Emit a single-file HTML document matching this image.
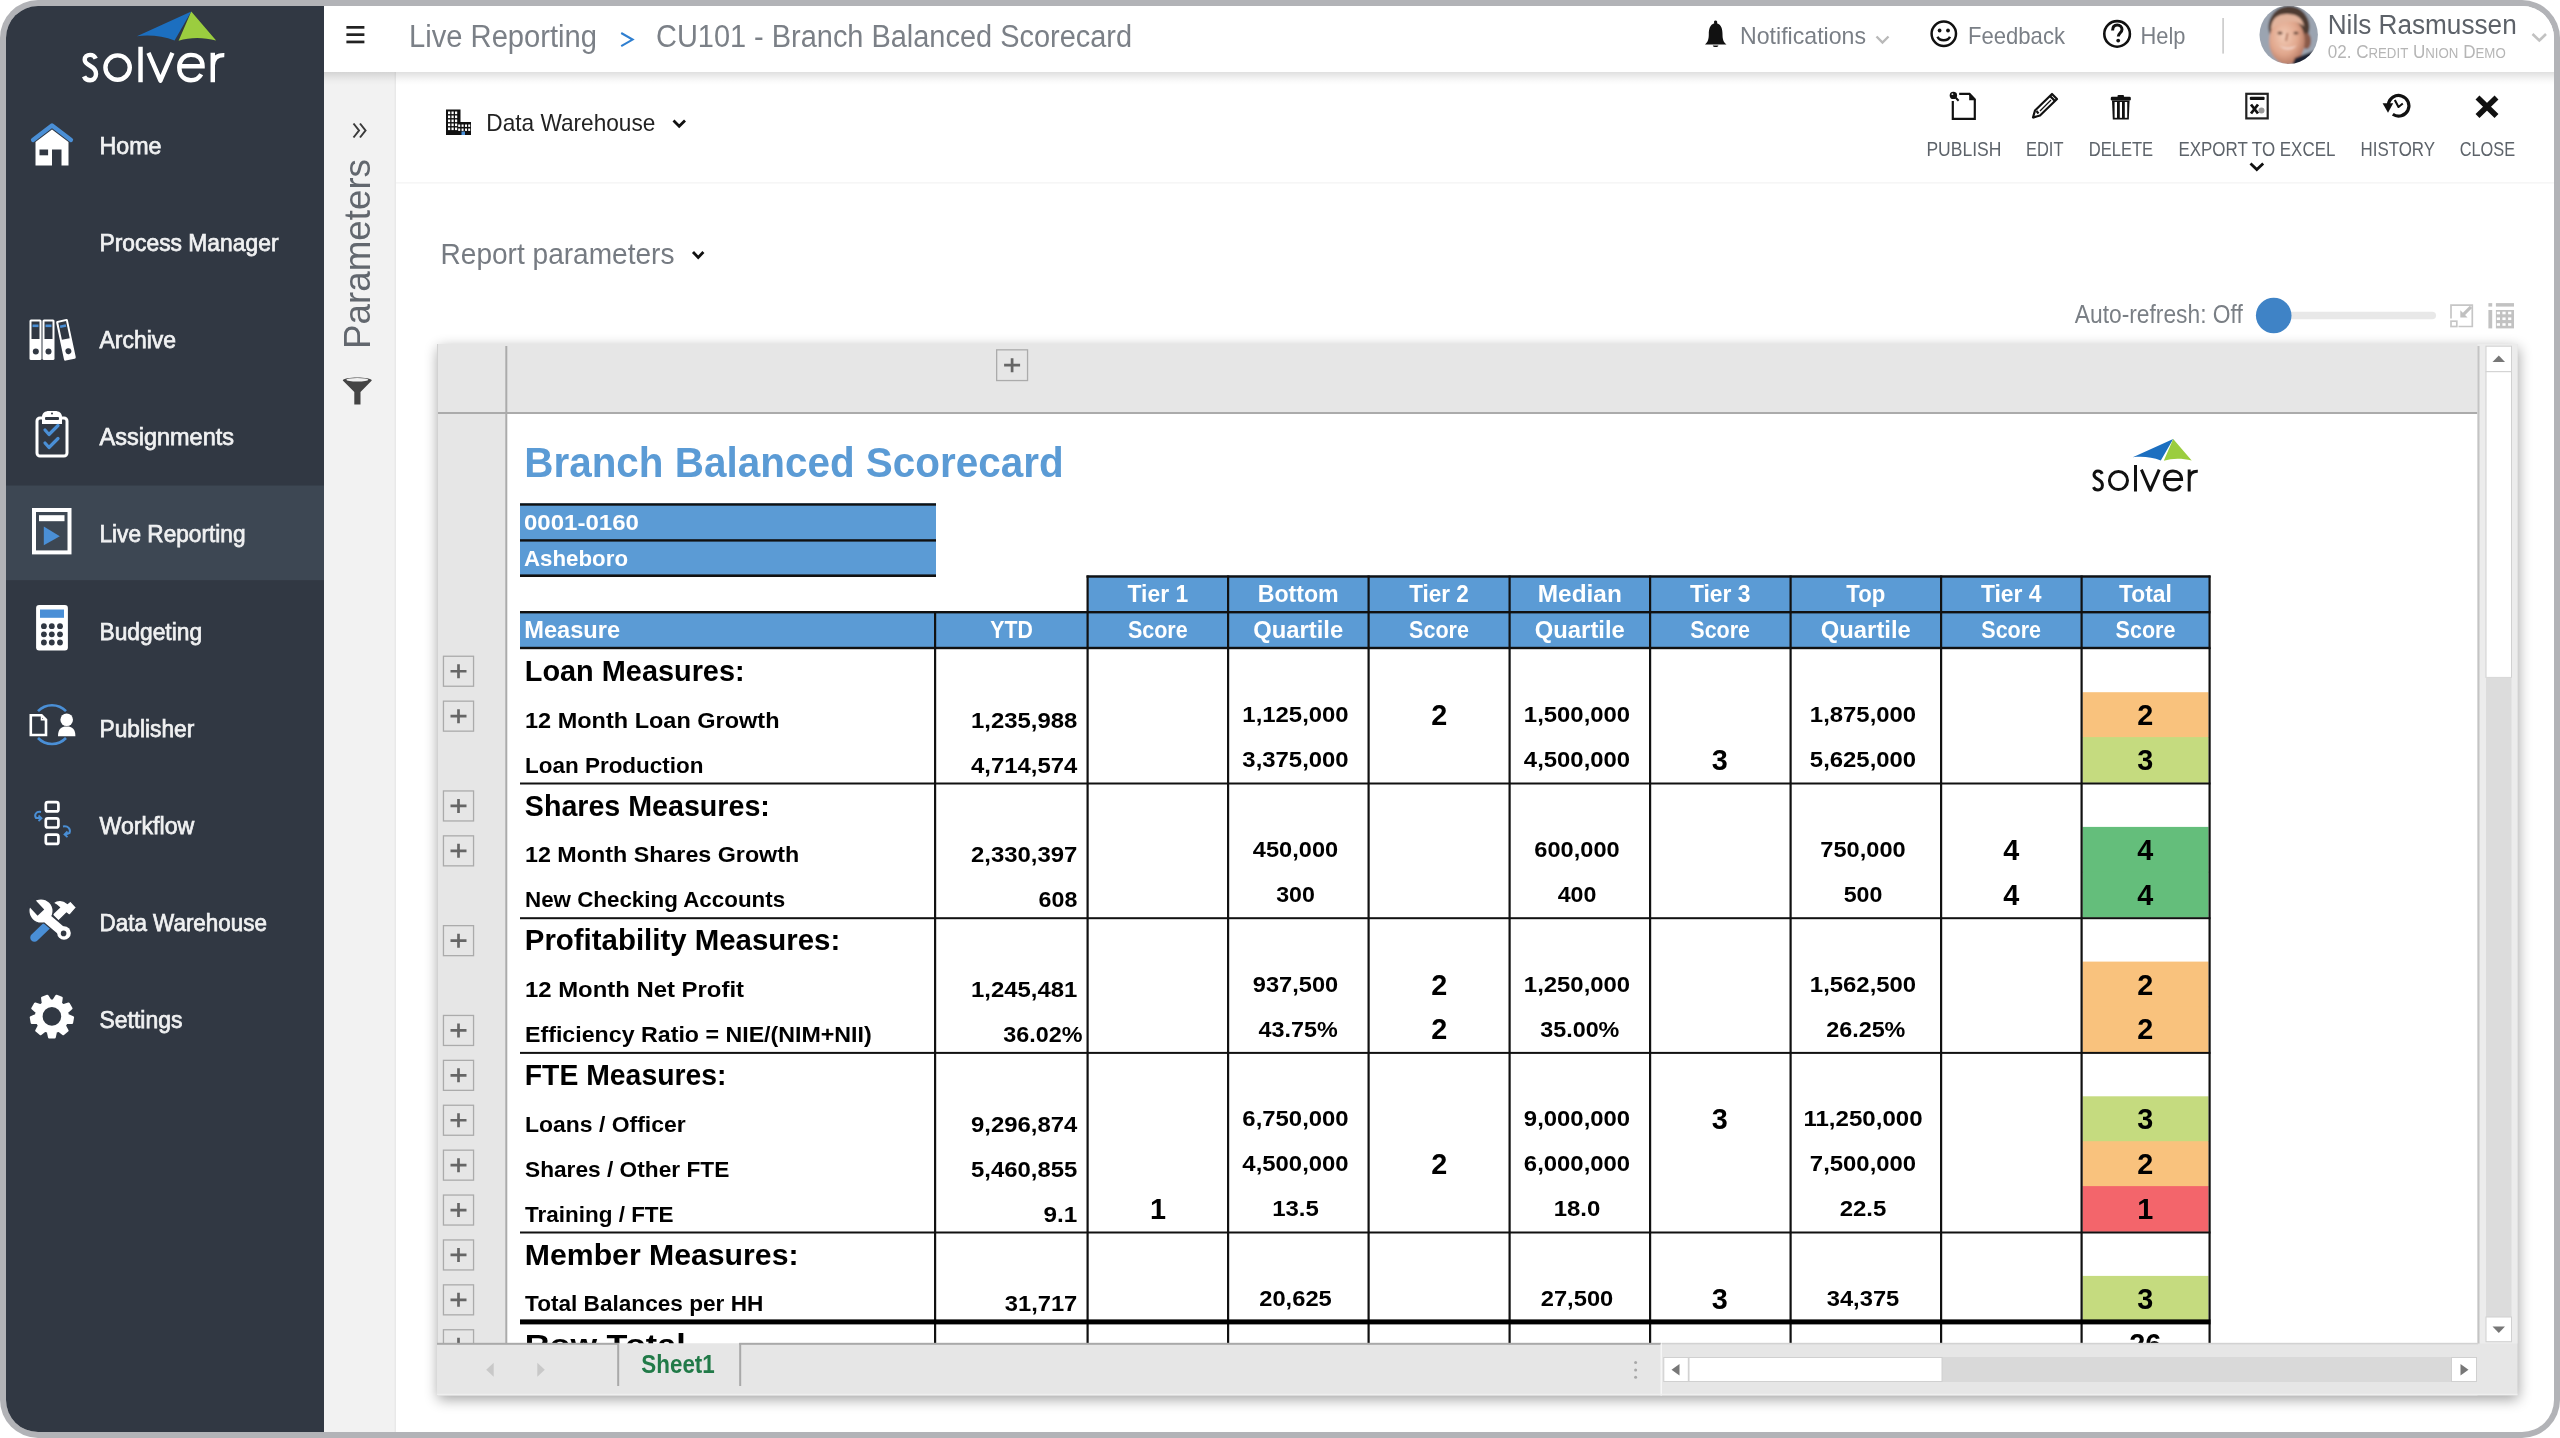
<!DOCTYPE html><html><head><meta charset="utf-8"><style>
html,body{margin:0;padding:0;background:#fff;width:2560px;height:1438px;overflow:hidden}
svg{display:block;font-family:"Liberation Sans", sans-serif;will-change:transform}
</style></head><body>
<svg width="2560" height="1438" viewBox="0 0 2560 1438">
<defs>
<clipPath id="inner"><rect x="6" y="6" width="2548" height="1426" rx="32" ry="32"/></clipPath>
<filter id="shadow" x="-5%" y="-5%" width="110%" height="110%"><feGaussianBlur stdDeviation="7"/></filter>
<filter id="blur1" x="-20%" y="-20%" width="140%" height="140%"><feGaussianBlur stdDeviation="1.2"/></filter>
<linearGradient id="topshadow" x1="0" y1="0" x2="0" y2="1"><stop offset="0" stop-color="#000" stop-opacity="0.125"/><stop offset="0.35" stop-color="#000" stop-opacity="0.07"/><stop offset="0.7" stop-color="#000" stop-opacity="0.02"/><stop offset="1" stop-color="#000" stop-opacity="0"/></linearGradient>
<radialGradient id="face" cx="0.42" cy="0.4" r="0.65"><stop offset="0" stop-color="#f2cbb6"/><stop offset="0.6" stop-color="#e0a68c"/><stop offset="1" stop-color="#b0745e"/></radialGradient>
<clipPath id="avclip"><circle cx="2288.7" cy="34.8" r="29.2"/></clipPath>
</defs>
<rect x="0" y="0" width="2560" height="1438" fill="#fff"/>
<rect x="0" y="0" width="2560" height="1438" rx="38" ry="38" fill="#b2b3b7"/>
<g clip-path="url(#inner)">
<rect x="0" y="0" width="2560" height="1438" fill="#fff"/>

<rect x="0" y="0" width="324" height="1438" fill="#313843"/>
<rect x="6" y="485.5" width="318" height="94.7" fill="#3d4753"/>
<g transform="translate(82.3,82.3) scale(1.345)">
<path d="M40.6,-34.3 L81,-52.6 L68.6,-31 C60,-34.5 50,-35.5 40.6,-34.3 Z" fill="#1c6fc0"/>
<path d="M81,-52.6 L99.5,-31 C90,-33.5 80,-33.5 71.6,-30.8 Z" fill="#9bcd3f"/>
<g fill="none" stroke="#ffffff" stroke-width="3.3" stroke-linecap="butt">
<path d="M10.0,-17.6 C9.2,-19.5 7.6,-20.4 5.8,-20.4 C3.4,-20.4 1.8,-19 1.8,-16.8 C1.8,-14.4 4,-13.2 6,-12.2 C8.6,-10.9 10.2,-9.4 10.2,-6.2 C10.2,-3.2 8.2,-1.5 5.8,-1.5 C3.6,-1.5 2,-2.6 1.3,-4.4"/>
<circle cx="26.25" cy="-10.95" r="9.05"/>
<path d="M43.3,-26.5 L43.3,0"/>
<path d="M49.2,-21.9 L58.1,-1.2 L67,-21.9" stroke-linejoin="round"/>
<path d="M72.1,-12 L89.4,-12 C89.4,-17.5 85.8,-20.4 80.75,-20.4 C75.5,-20.4 72.1,-16.4 72.1,-10.95 C72.1,-5.2 75.6,-1.5 80.75,-1.5 C84.2,-1.5 86.9,-3.2 88.4,-6"/>
<path d="M97,-21.9 L97,0 M97,-12.5 C97.4,-17.8 100.2,-20.4 105.6,-20.2"/>
</g>
</g>
<text x="99.5" y="154.0" font-size="24.6" fill="#f0f1f2" textLength="62" lengthAdjust="spacingAndGlyphs" stroke="#f0f1f2" stroke-width="0.75">Home</text>
<text x="99.5" y="251.1" font-size="24.6" fill="#f0f1f2" textLength="179" lengthAdjust="spacingAndGlyphs" stroke="#f0f1f2" stroke-width="0.75">Process Manager</text>
<text x="99.5" y="348.2" font-size="24.6" fill="#f0f1f2" textLength="76.5" lengthAdjust="spacingAndGlyphs" stroke="#f0f1f2" stroke-width="0.75">Archive</text>
<text x="99.5" y="445.3" font-size="24.6" fill="#f0f1f2" textLength="134.5" lengthAdjust="spacingAndGlyphs" stroke="#f0f1f2" stroke-width="0.75">Assignments</text>
<text x="99.5" y="542.4" font-size="24.6" fill="#f0f1f2" textLength="146" lengthAdjust="spacingAndGlyphs" stroke="#f0f1f2" stroke-width="0.75">Live Reporting</text>
<text x="99.5" y="639.5" font-size="24.6" fill="#f0f1f2" textLength="102.6" lengthAdjust="spacingAndGlyphs" stroke="#f0f1f2" stroke-width="0.75">Budgeting</text>
<text x="99.5" y="736.6" font-size="24.6" fill="#f0f1f2" textLength="94.8" lengthAdjust="spacingAndGlyphs" stroke="#f0f1f2" stroke-width="0.75">Publisher</text>
<text x="99.5" y="833.7" font-size="24.6" fill="#f0f1f2" textLength="94.8" lengthAdjust="spacingAndGlyphs" stroke="#f0f1f2" stroke-width="0.75">Workflow</text>
<text x="99.5" y="930.8" font-size="24.6" fill="#f0f1f2" textLength="167.4" lengthAdjust="spacingAndGlyphs" stroke="#f0f1f2" stroke-width="0.75">Data Warehouse</text>
<text x="99.5" y="1027.9" font-size="24.6" fill="#f0f1f2" textLength="83" lengthAdjust="spacingAndGlyphs" stroke="#f0f1f2" stroke-width="0.75">Settings</text>
<path d="M33,140 L52,125.5 L71,140" fill="none" stroke="#4a8fd6" stroke-width="4.2" stroke-linecap="round" stroke-linejoin="round"/>
<path d="M35.5,142 L52,129.5 L68.5,142 L68.5,165.5 L61.5,165.5 L61.5,149.5 L52,149.5 L52,165.5 L35.5,165.5 Z" fill="#ffffff"/>
<rect x="39.5" y="149.5" width="8.6" height="5.8" fill="#313843"/>
<rect x="29.5" y="319.5" width="12" height="40.6" rx="1.5" fill="#ffffff"/>
<rect x="42.5" y="319.5" width="12" height="40.6" rx="1.5" fill="#ffffff"/>
<rect x="31.5" y="321.5" width="8" height="17.5" fill="#313843"/><rect x="44.5" y="321.5" width="8" height="17.5" fill="#313843"/>
<rect x="32.5" y="324.5" width="6" height="2.6" fill="#4a8fd6"/><rect x="45.5" y="324.5" width="6" height="2.6" fill="#4a8fd6"/>
<circle cx="35.8" cy="351.5" r="3" fill="#313843"/><circle cx="48.5" cy="351.5" r="3" fill="#313843"/>
<g transform="rotate(-12 66 340)"><rect x="60" y="319.5" width="12" height="40.6" rx="1.5" fill="#ffffff"/><rect x="62" y="321.5" width="8" height="17.5" fill="#313843"/><rect x="63" y="324.5" width="6" height="2.6" fill="#4a8fd6"/><circle cx="66" cy="351.5" r="3" fill="#313843"/></g>
<rect x="37" y="418" width="30" height="38" rx="3" fill="none" stroke="#ffffff" stroke-width="3"/>
<path d="M42,424 L42,417 C42,413 45,411 49,411 L55,411 C59,411 62,413 62,417 L62,424 Z" fill="#ffffff"/>
<rect x="45" y="417" width="14" height="3" rx="1" fill="#313843"/><circle cx="52" cy="413.5" r="1" fill="#313843"/>
<path d="M45,430 L49,434.5 L58,425.5 M45,443 L49,447.5 L58,438.5" fill="none" stroke="#4a8fd6" stroke-width="3.2" stroke-linecap="round" stroke-linejoin="round"/>
<rect x="34" y="510" width="35.5" height="42.4" fill="none" stroke="#ffffff" stroke-width="4"/>
<rect x="39" y="515.2" width="25.5" height="6" fill="#ffffff"/>
<path d="M43.8,526.5 L59.8,536.2 L43.8,545.2 Z" fill="#4a8fd6"/>
<rect x="36.1" y="605" width="31.8" height="45.6" rx="3" fill="#ffffff"/>
<rect x="40" y="609.5" width="24" height="8.3" fill="#4a8fd6"/>
<circle cx="43.9" cy="626.2" r="2.9" fill="#313843"/>
<circle cx="51.8" cy="626.2" r="2.9" fill="#313843"/>
<circle cx="60" cy="626.2" r="2.9" fill="#313843"/>
<circle cx="43.9" cy="634.3" r="2.9" fill="#313843"/>
<circle cx="51.8" cy="634.3" r="2.9" fill="#313843"/>
<circle cx="60" cy="634.3" r="2.9" fill="#313843"/>
<circle cx="43.9" cy="642.5" r="2.9" fill="#313843"/>
<circle cx="51.8" cy="642.5" r="2.9" fill="#313843"/>
<circle cx="60" cy="642.5" r="2.9" fill="#313843"/>
<path d="M38,711.2 A19.4,19.4 0 0 1 66,711.2" fill="none" stroke="#4a8fd6" stroke-width="2.6"/>
<path d="M38,738 A19.4,19.4 0 0 0 66,738" fill="none" stroke="#4a8fd6" stroke-width="2.6"/>
<path d="M30.8,715.3 L41.5,715.3 L46,719.8 L46,735 L30.8,735 Z" fill="#313843" stroke="#ffffff" stroke-width="2.6" stroke-linejoin="miter"/>
<path d="M41.5,715.3 L41.5,719.8 L46,719.8" fill="none" stroke="#ffffff" stroke-width="1.5"/>
<circle cx="66.7" cy="719.8" r="6.3" fill="#ffffff"/>
<path d="M58,736.3 C58,729 61,726.5 66.7,726.5 C72.4,726.5 75.4,729 75.4,736.3 Z" fill="#ffffff"/>
<rect x="45.8" y="802.1999999999999" width="12.6" height="9.2" rx="2" fill="none" stroke="#ffffff" stroke-width="2.7"/>
<rect x="45.8" y="818.3" width="12.6" height="9.2" rx="2" fill="none" stroke="#ffffff" stroke-width="2.7"/>
<rect x="45.8" y="834.6999999999999" width="12.6" height="9.2" rx="2" fill="none" stroke="#ffffff" stroke-width="2.7"/>
<path d="M41,812 C36,811 34,815 36,818 L40,818" fill="none" stroke="#4a8fd6" stroke-width="2"/><path d="M38.5,815.5 L41.5,818.2 L38.5,821" fill="none" stroke="#4a8fd6" stroke-width="1.8"/>
<path d="M63,826.5 C68,825.5 71,829 69.5,833 L65.5,834.5" fill="none" stroke="#4a8fd6" stroke-width="2"/><path d="M67.5,831.5 L64.5,834.5 L67.5,837.2" fill="none" stroke="#4a8fd6" stroke-width="1.8"/>
<path d="M47,925.5 L34.5,937.5" stroke="#4a8fd6" stroke-width="8.5" stroke-linecap="round"/>
<path d="M53,903 C57,899.5 63,899.5 67.5,903.5 L70.5,901 L76.5,907.5 L69.5,915.5 L66.5,913 L58.5,921 L52,914.5 L59.5,907.5 C57.5,905.5 55.5,904 53,903 Z" fill="#ffffff" stroke="#313843" stroke-width="1.2"/>
<g stroke="#313843" stroke-width="1.6">
<path d="M44,916 L64,933" stroke-width="11.6" stroke-linecap="round"/>
</g>
<circle cx="41" cy="911" r="12.2" fill="#ffffff" stroke="#313843" stroke-width="1.4"/>
<path d="M44,916 L64,933" stroke="#ffffff" stroke-width="9.5" stroke-linecap="round"/>
<circle cx="64" cy="933" r="6.8" fill="#ffffff"/>
<path d="M44.2,909.5 L32.8,897.3 L26.2,903.6 L37.6,915.8 Z" fill="#313843"/>
<circle cx="63.6" cy="933.4" r="2.8" fill="#313843"/>
<path d="M54.62,1037.22 L49.18,1037.22 L47.99,1031.71 L45.05,1030.64 L40.60,1034.10 L36.43,1030.60 L39.07,1025.61 L37.50,1022.91 L31.87,1022.70 L30.92,1017.33 L36.14,1015.21 L36.69,1012.13 L32.51,1008.35 L35.23,1003.63 L40.60,1005.36 L42.99,1003.35 L42.22,997.76 L47.34,995.90 L50.34,1000.68 L53.46,1000.68 L56.46,995.90 L61.58,997.76 L60.81,1003.35 L63.20,1005.36 L68.57,1003.63 L71.29,1008.35 L67.11,1012.13 L67.66,1015.21 L72.88,1017.33 L71.93,1022.70 L66.30,1022.91 L64.73,1025.61 L67.37,1030.60 L63.20,1034.10 L58.75,1030.64 L55.81,1031.71 Z" fill="#ffffff" stroke="#ffffff" stroke-width="2.4" stroke-linejoin="round"/>
<circle cx="51.9" cy="1016.4" r="9.3" fill="#313843"/>
<rect x="324" y="0" width="2236" height="72" fill="#fff"/>
<rect x="346.4" y="26.0" width="18" height="2.7" fill="#222"/>
<rect x="346.4" y="33.300000000000004" width="18" height="2.7" fill="#222"/>
<rect x="346.4" y="40.6" width="18" height="2.7" fill="#222"/>
<text x="409" y="47" font-size="31" fill="#7b8087" textLength="188" lengthAdjust="spacingAndGlyphs" >Live Reporting</text>
<path d="M621.2,33 L632.6,39.6 L621.2,46.2" fill="none" stroke="#2f7fd0" stroke-width="2.1"/>
<text x="656" y="46.7" font-size="31" fill="#7b8087" textLength="476" lengthAdjust="spacingAndGlyphs" >CU101 - Branch Balanced Scorecard</text>
<path d="M1715.5,20.5 C1714,20.5 1713.6,22 1714.3,23.2 C1710,24.6 1708.8,29 1708.8,34 C1708.8,39 1708,42 1705,44.6 L1726.5,44.6 C1723.3,42 1722.5,39 1722.5,34 C1722.5,29 1721.3,24.6 1717,23.2 C1717.6,22 1717.2,20.5 1715.5,20.5 Z" fill="#111"/>
<path d="M1712.8,45.6 C1713,47.6 1718.2,47.6 1718.4,45.6 Z" fill="#111"/>
<text x="1740" y="43.6" font-size="23.8" fill="#7a7f86" textLength="126" lengthAdjust="spacingAndGlyphs" >Notifications</text>
<path d="M1876.5,36.5 L1882.5,42.5 L1888.5,36.5" fill="none" stroke="#b9b9b9" stroke-width="2.4"/>
<circle cx="1943.8" cy="33.8" r="12.2" fill="none" stroke="#111" stroke-width="2.5"/>
<circle cx="1939.6" cy="30.5" r="1.9" fill="#111"/><circle cx="1948" cy="30.5" r="1.9" fill="#111"/>
<path d="M1937.5,36.8 C1939.5,41.5 1948,41.5 1950,36.8" fill="none" stroke="#111" stroke-width="2.5"/>
<text x="1968" y="43.6" font-size="23.8" fill="#7a7f86" textLength="97" lengthAdjust="spacingAndGlyphs" >Feedback</text>
<circle cx="2117.1" cy="33.9" r="12.8" fill="none" stroke="#111" stroke-width="2.6"/>
<path d="M2112.6,30.5 C2112.6,26.5 2115,25 2117.3,25 C2120,25 2122,27 2122,29.5 C2122,32.5 2118.5,33 2118.3,36.5" fill="none" stroke="#111" stroke-width="3"/>
<circle cx="2118.2" cy="40.6" r="1.9" fill="#111"/>
<text x="2140.5" y="43.5" font-size="23.8" fill="#7a7f86" textLength="45" lengthAdjust="spacingAndGlyphs" >Help</text>
<rect x="2222.3" y="18" width="1.6" height="35.6" fill="#c9c9c9"/>
<g clip-path="url(#avclip)"><g filter="url(#blur1)">
<rect x="2255" y="0" width="70" height="70" fill="#9ba4b1"/>
<ellipse cx="2289" cy="27" rx="20.5" ry="21" fill="#4d3b30"/>
<ellipse cx="2306.5" cy="41" rx="4.5" ry="8" fill="#8a5a48"/>
<ellipse cx="2287" cy="41" rx="17.8" ry="23.5" fill="url(#face)"/>
<path d="M2271,30 C2271,18 2278,14 2287,14 C2297,14 2303,18 2304,27 C2300,20 2280,19 2271,30 Z" fill="#e2b39c"/>
<path d="M2295,58 L2316,50 L2322,70 L2290,70 Z" fill="#1c2030"/>
<ellipse cx="2280" cy="33" rx="2.6" ry="1.5" fill="#6e4e40"/><ellipse cx="2296" cy="33" rx="2.6" ry="1.5" fill="#6e4e40"/>
<path d="M2287.5,33 L2286,41" stroke="#b27860" stroke-width="2"/>
<path d="M2279,45 C2284,48.5 2291,48.5 2297,45 C2292,51 2284,51 2279,45 Z" fill="#f3d6cc"/>
</g></g>
<text x="2327.7" y="33.5" font-size="27" fill="#5d6269" textLength="189" lengthAdjust="spacingAndGlyphs" >Nils Rasmussen</text>
<text x="2327.7" y="58.2" font-size="18" fill="#b5b5b5" textLength="178" lengthAdjust="spacingAndGlyphs">02. C<tspan font-size="14">REDIT</tspan> U<tspan font-size="14">NION</tspan> D<tspan font-size="14">EMO</tspan></text>
<path d="M2532.5,34 L2539.3,40.5 L2546,34" fill="none" stroke="#c2c2c2" stroke-width="2.6"/>
<rect x="324" y="80" width="71.5" height="1360" fill="#f2f2f2"/>
<rect x="324" y="72" width="71.5" height="8" fill="#f2f2f2"/>
<rect x="394.5" y="72" width="1.5" height="1366" fill="#e9e9e9"/>
<rect x="324" y="72" width="2236" height="13" fill="url(#topshadow)"/>
<path d="M353.5,123.5 L359,130.5 L353.5,137.5 M360,123.5 L365.5,130.5 L360,137.5" fill="none" stroke="#3b3b3b" stroke-width="2"/>
<text transform="translate(370,349) rotate(-90)" x="0" y="0" font-size="37" fill="#62676e" textLength="190" lengthAdjust="spacingAndGlyphs">Parameters</text>
<path d="M342.8,380.5 C342.8,376.5 371.8,376.5 371.8,380.5 L360.5,392 L360.5,404.5 L354.3,404.5 L354.3,392 Z" fill="#444"/>
<ellipse cx="357.3" cy="379.8" rx="11" ry="1.8" fill="#f0f0f0"/>
<rect x="396" y="182.3" width="2158" height="1.2" fill="#f3f3f3"/>
<g fill="#111">
<rect x="446" y="109.5" width="14.5" height="25.5"/>
<rect x="456" y="122" width="15" height="13"/>
</g>
<rect x="448" y="111.5" width="2.2" height="2.6" fill="#fff"/>
<rect x="448" y="115.5" width="2.2" height="2.6" fill="#fff"/>
<rect x="448" y="119.5" width="2.2" height="2.6" fill="#fff"/>
<rect x="448" y="123.5" width="2.2" height="2.6" fill="#fff"/>
<rect x="448" y="127.5" width="2.2" height="2.6" fill="#fff"/>
<rect x="451.5" y="111.5" width="2.2" height="2.6" fill="#fff"/>
<rect x="451.5" y="115.5" width="2.2" height="2.6" fill="#fff"/>
<rect x="451.5" y="119.5" width="2.2" height="2.6" fill="#fff"/>
<rect x="451.5" y="123.5" width="2.2" height="2.6" fill="#fff"/>
<rect x="451.5" y="127.5" width="2.2" height="2.6" fill="#fff"/>
<rect x="455" y="111.5" width="2.2" height="2.6" fill="#fff"/>
<rect x="455" y="115.5" width="2.2" height="2.6" fill="#fff"/>
<rect x="455" y="119.5" width="2.2" height="2.6" fill="#fff"/>
<rect x="455" y="123.5" width="2.2" height="2.6" fill="#fff"/>
<rect x="455" y="127.5" width="2.2" height="2.6" fill="#fff"/>
<rect x="458.2" y="124.5" width="2" height="2.4" fill="#fff"/>
<rect x="458.2" y="128.5" width="2" height="2.4" fill="#fff"/>
<rect x="461.6" y="124.5" width="2" height="2.4" fill="#fff"/>
<rect x="461.6" y="128.5" width="2" height="2.4" fill="#fff"/>
<rect x="465" y="124.5" width="2" height="2.4" fill="#fff"/>
<rect x="465" y="128.5" width="2" height="2.4" fill="#fff"/>
<rect x="468.2" y="124.5" width="2" height="2.4" fill="#fff"/>
<rect x="468.2" y="128.5" width="2" height="2.4" fill="#fff"/>
<rect x="461.5" y="131.5" width="3.5" height="3.5" fill="#4a8fd6"/>
<text x="486.3" y="130.5" font-size="23.8" fill="#222" textLength="169" lengthAdjust="spacingAndGlyphs" >Data Warehouse</text>
<path d="M673.5,120.5 L679.2,126.2 L685,120.5" fill="none" stroke="#111" stroke-width="2.8"/>
<text x="1926.4" y="155.6" font-size="19.6" fill="#5d636a" textLength="75" lengthAdjust="spacingAndGlyphs" >PUBLISH</text>
<text x="2026" y="155.6" font-size="19.6" fill="#5d636a" textLength="37.5" lengthAdjust="spacingAndGlyphs" >EDIT</text>
<text x="2088.7" y="155.6" font-size="19.6" fill="#5d636a" textLength="64.5" lengthAdjust="spacingAndGlyphs" >DELETE</text>
<text x="2178.4" y="155.9" font-size="19.6" fill="#5d636a" textLength="157" lengthAdjust="spacingAndGlyphs" >EXPORT TO EXCEL</text>
<text x="2360.5" y="155.9" font-size="19.6" fill="#5d636a" textLength="74.5" lengthAdjust="spacingAndGlyphs" >HISTORY</text>
<text x="2459.7" y="155.9" font-size="19.6" fill="#5d636a" textLength="55.5" lengthAdjust="spacingAndGlyphs" >CLOSE</text>
<path d="M1959.2,93.9 L1969.5,93.9 L1974.8,99.5 L1974.8,118.9 L1952.8,118.9 L1952.8,101" fill="none" stroke="#111" stroke-width="2.2"/>
<path d="M1969.2,93.9 L1969.2,100.2 L1974.8,100.2 Z" fill="#111"/>
<circle cx="1953.4" cy="95.4" r="3.7" fill="#111"/><circle cx="1952.4" cy="94.2" r="0.9" fill="#ddd"/>
<path d="M1955.8,97.8 L1958.6,100.8" stroke="#111" stroke-width="2"/>
<path d="M2033,117.5 L2035,110.5 L2052,94 L2057,99 L2040,115.5 Z" fill="none" stroke="#111" stroke-width="2.2" stroke-linejoin="round"/>
<path d="M2050,96 L2055,101 M2036.5,111 L2038.5,113.5 M2033,117.5 L2036,116.8" stroke="#111" stroke-width="2.2"/>
<path d="M2040,111 L2051,100" stroke="#111" stroke-width="1.2"/>
<rect x="2110.8" y="96.8" width="20" height="3.6" rx="1.2" fill="#111"/>
<rect x="2117.5" y="95" width="6.5" height="2.5" rx="1" fill="#111"/>
<path d="M2112,100.5 L2112.8,119.5 L2128.8,119.5 L2129.6,100.5 Z" fill="#111"/>
<rect x="2114.6" y="102" width="2.4" height="15.8" fill="#fff"/><rect x="2119.8" y="102" width="2.2" height="15.8" fill="#fff"/><rect x="2124.8" y="102" width="2.4" height="15.8" fill="#fff"/>
<rect x="2246.3" y="93.8" width="21.4" height="24.6" fill="none" stroke="#222" stroke-width="2.2"/>
<rect x="2249.8" y="96.8" width="14.8" height="3.2" rx="1" fill="#111"/>
<path d="M2251,104.5 L2258,113.5 M2258,104.5 L2251,113.5" stroke="#111" stroke-width="2.8"/>
<circle cx="2261.5" cy="110.5" r="3" fill="#999"/>
<path d="M2250.5,163.5 L2256.8,169.5 L2263.2,163.5" fill="none" stroke="#111" stroke-width="2.8"/>
<path d="M2392.8,114.3 A10.3,10.3 0 1 0 2388.4,104.5" fill="none" stroke="#111" stroke-width="3.2"/>
<path d="M2382.6,103.2 L2393.2,103.2 L2388,112.8 Z" fill="#111"/>
<path d="M2394.8,100 L2398.5,107 L2402.8,103.5" fill="none" stroke="#111" stroke-width="2.1" stroke-linejoin="round"/>
<path d="M2477.5,97.5 L2496.5,116 M2496.5,97.5 L2477.5,116" stroke="#111" stroke-width="5.6"/>
<text x="440.5" y="264.3" font-size="29.8" fill="#767b82" textLength="234" lengthAdjust="spacingAndGlyphs" >Report parameters</text>
<path d="M693,252 L698.2,257.5 L703.4,252" fill="none" stroke="#111" stroke-width="2.8"/>
<text x="2074.8" y="322.7" font-size="25.4" fill="#7a7f85" textLength="168" lengthAdjust="spacingAndGlyphs" >Auto-refresh: Off</text>
<rect x="2288" y="311.7" width="148" height="7.5" rx="3.75" fill="#e8e8e8"/>
<circle cx="2273.7" cy="315.5" r="17.8" fill="#3f83c6"/>
<path d="M2451,318.5 L2451,305.2 L2472.3,305.2 L2472.3,326.5 L2458.5,326.5" fill="none" stroke="#c6c6c6" stroke-width="1.7"/>
<rect x="2451" y="321.2" width="5.8" height="5.3" fill="none" stroke="#c6c6c6" stroke-width="1.7"/>
<path d="M2471,306.8 L2463,314.8" stroke="#c0c0c0" stroke-width="3.2"/>
<path d="M2460.3,310.3 L2460.3,317.6 L2467.6,317.6 Z" fill="#c0c0c0"/>
<g fill="#c2c2c2">
<rect x="2488.4" y="303.1" width="3.8" height="3.5"/>
<rect x="2495.9" y="303.1" width="18.1" height="3.5"/>
<rect x="2488.4" y="310" width="3.8" height="18.4"/>
<rect x="2495.9" y="310" width="18.1" height="18.4"/>
</g>
<rect x="2496.8" y="311.70" width="3.2" height="2.6" fill="#fff"/>
<rect x="2496.8" y="317.45" width="3.2" height="2.6" fill="#fff"/>
<rect x="2496.8" y="323.20" width="3.2" height="2.6" fill="#fff"/>
<rect x="2502.4" y="311.70" width="3.2" height="2.6" fill="#fff"/>
<rect x="2502.4" y="317.45" width="3.2" height="2.6" fill="#fff"/>
<rect x="2502.4" y="323.20" width="3.2" height="2.6" fill="#fff"/>
<rect x="2508.1" y="311.70" width="3.2" height="2.6" fill="#fff"/>
<rect x="2508.1" y="317.45" width="3.2" height="2.6" fill="#fff"/>
<rect x="2508.1" y="323.20" width="3.2" height="2.6" fill="#fff"/>
<rect x="438" y="348" width="2080.5" height="1051.5" fill="#000" opacity="0.36" filter="url(#shadow)"/>
<rect x="437" y="344" width="2080.5" height="1051.5" fill="#e6e6e6"/>
<rect x="507" y="414" width="1970.5" height="929.5" fill="#fff"/>
<rect x="437" y="412" width="2040.5" height="2" fill="#ababab"/>
<rect x="505.3" y="346" width="2" height="997.5" fill="#ababab"/>
<rect x="437" y="344" width="1" height="1051.5" fill="#d2d2d2"/>
<rect x="996.65" y="349.84999999999997" width="30.900000000000002" height="30.7" fill="none" stroke="#ababab" stroke-width="1.3"/>
<path d="M1004.1,365.2 L1020.1,365.2 M1012.1,358.2 L1012.1,372.2" stroke="#666" stroke-width="2.7"/>
<text x="524.2" y="476.6" font-size="42" fill="#5b9bd5" font-weight="bold" textLength="539.5" lengthAdjust="spacingAndGlyphs" >Branch Balanced Scorecard</text>
<g transform="translate(2092.2,491.5) scale(1.0)">
<path d="M40.6,-34.3 L81,-52.6 L68.6,-31 C60,-34.5 50,-35.5 40.6,-34.3 Z" fill="#1c6fc0"/>
<path d="M81,-52.6 L99.5,-31 C90,-33.5 80,-33.5 71.6,-30.8 Z" fill="#9bcd3f"/>
<g fill="none" stroke="#111111" stroke-width="3.0" stroke-linecap="butt">
<path d="M10.0,-17.6 C9.2,-19.5 7.6,-20.4 5.8,-20.4 C3.4,-20.4 1.8,-19 1.8,-16.8 C1.8,-14.4 4,-13.2 6,-12.2 C8.6,-10.9 10.2,-9.4 10.2,-6.2 C10.2,-3.2 8.2,-1.5 5.8,-1.5 C3.6,-1.5 2,-2.6 1.3,-4.4"/>
<circle cx="26.25" cy="-10.95" r="9.05"/>
<path d="M43.3,-26.5 L43.3,0"/>
<path d="M49.2,-21.9 L58.1,-1.2 L67,-21.9" stroke-linejoin="round"/>
<path d="M72.1,-12 L89.4,-12 C89.4,-17.5 85.8,-20.4 80.75,-20.4 C75.5,-20.4 72.1,-16.4 72.1,-10.95 C72.1,-5.2 75.6,-1.5 80.75,-1.5 C84.2,-1.5 86.9,-3.2 88.4,-6"/>
<path d="M97,-21.9 L97,0 M97,-12.5 C97.4,-17.8 100.2,-20.4 105.6,-20.2"/>
</g>
</g>
<rect x="520" y="503.3" width="416" height="73.5" fill="#5b9bd5"/>
<rect x="520" y="503.3" width="416" height="2.4" fill="#111"/>
<rect x="520" y="539.2" width="416" height="2.4" fill="#111"/>
<rect x="520" y="574.4" width="416" height="2.6" fill="#111"/>
<text x="524" y="530.3" font-size="22" fill="#fff" font-weight="bold" textLength="115" lengthAdjust="spacingAndGlyphs" >0001-0160</text>
<text x="524" y="565.8" font-size="22" fill="#fff" font-weight="bold" textLength="104" lengthAdjust="spacingAndGlyphs" >Asheboro</text>
<rect x="1087.5" y="575.6" width="1122.0" height="36" fill="#5b9bd5"/>
<rect x="520" y="611.5" width="1689.5" height="37" fill="#5b9bd5"/>
<rect x="1086.5" y="575.3" width="1124.0" height="2.4" fill="#111"/>
<rect x="520" y="611" width="1690.5" height="2.4" fill="#111"/>
<rect x="520" y="646.8" width="1690.5" height="2.4" fill="#111"/>
<text x="524.2" y="638" font-size="23" fill="#fff" font-weight="bold" textLength="96" lengthAdjust="spacingAndGlyphs" >Measure</text>
<text x="1157.8" y="602" font-size="23" fill="#fff" font-weight="bold" textLength="60.6" lengthAdjust="spacingAndGlyphs" text-anchor="middle" >Tier 1</text>
<text x="1157.8" y="638" font-size="23" fill="#fff" font-weight="bold" textLength="59.8" lengthAdjust="spacingAndGlyphs" text-anchor="middle" >Score</text>
<text x="1298.2" y="602" font-size="23" fill="#fff" font-weight="bold" textLength="81" lengthAdjust="spacingAndGlyphs" text-anchor="middle" >Bottom</text>
<text x="1298.2" y="638" font-size="23" fill="#fff" font-weight="bold" textLength="90" lengthAdjust="spacingAndGlyphs" text-anchor="middle" >Quartile</text>
<text x="1439.0" y="602" font-size="23" fill="#fff" font-weight="bold" textLength="59.6" lengthAdjust="spacingAndGlyphs" text-anchor="middle" >Tier 2</text>
<text x="1439.0" y="638" font-size="23" fill="#fff" font-weight="bold" textLength="59.8" lengthAdjust="spacingAndGlyphs" text-anchor="middle" >Score</text>
<text x="1579.8" y="602" font-size="23" fill="#fff" font-weight="bold" textLength="84" lengthAdjust="spacingAndGlyphs" text-anchor="middle" >Median</text>
<text x="1579.8" y="638" font-size="23" fill="#fff" font-weight="bold" textLength="90" lengthAdjust="spacingAndGlyphs" text-anchor="middle" >Quartile</text>
<text x="1720.2" y="602" font-size="23" fill="#fff" font-weight="bold" textLength="60.6" lengthAdjust="spacingAndGlyphs" text-anchor="middle" >Tier 3</text>
<text x="1720.2" y="638" font-size="23" fill="#fff" font-weight="bold" textLength="59.8" lengthAdjust="spacingAndGlyphs" text-anchor="middle" >Score</text>
<text x="1865.8" y="602" font-size="23" fill="#fff" font-weight="bold" textLength="39" lengthAdjust="spacingAndGlyphs" text-anchor="middle" >Top</text>
<text x="1865.8" y="638" font-size="23" fill="#fff" font-weight="bold" textLength="90" lengthAdjust="spacingAndGlyphs" text-anchor="middle" >Quartile</text>
<text x="2011.2" y="602" font-size="23" fill="#fff" font-weight="bold" textLength="60.6" lengthAdjust="spacingAndGlyphs" text-anchor="middle" >Tier 4</text>
<text x="2011.2" y="638" font-size="23" fill="#fff" font-weight="bold" textLength="59.8" lengthAdjust="spacingAndGlyphs" text-anchor="middle" >Score</text>
<text x="2145.5" y="602" font-size="23" fill="#fff" font-weight="bold" textLength="52.8" lengthAdjust="spacingAndGlyphs" text-anchor="middle" >Total</text>
<text x="2145.5" y="638" font-size="23" fill="#fff" font-weight="bold" textLength="59.8" lengthAdjust="spacingAndGlyphs" text-anchor="middle" >Score</text>
<text x="1011.5" y="638" font-size="23" fill="#fff" font-weight="bold" textLength="42.5" lengthAdjust="spacingAndGlyphs" text-anchor="middle" >YTD</text>
<clipPath id="sheetclip"><rect x="437" y="414" width="2040.5" height="929.5"/></clipPath>
<g clip-path="url(#sheetclip)">
<rect x="443.45" y="656.25" width="30.099999999999998" height="30.0" fill="none" stroke="#ababab" stroke-width="1.3"/>
<path d="M450.5,671.25 L466.5,671.25 M458.5,664.25 L458.5,678.25" stroke="#666" stroke-width="2.7"/>
<rect x="443.45" y="701.15" width="30.099999999999998" height="30.0" fill="none" stroke="#ababab" stroke-width="1.3"/>
<path d="M450.5,716.15 L466.5,716.15 M458.5,709.15 L458.5,723.15" stroke="#666" stroke-width="2.7"/>
<rect x="2082.5" y="692.2" width="126" height="45.7" fill="#f9c27d"/>
<rect x="2082.5" y="737.1" width="126" height="45.7" fill="#c5db7f"/>
<rect x="443.45" y="790.9499999999999" width="30.099999999999998" height="30.0" fill="none" stroke="#ababab" stroke-width="1.3"/>
<path d="M450.5,805.9499999999999 L466.5,805.9499999999999 M458.5,798.9499999999999 L458.5,812.9499999999999" stroke="#666" stroke-width="2.7"/>
<rect x="443.45" y="835.85" width="30.099999999999998" height="30.0" fill="none" stroke="#ababab" stroke-width="1.3"/>
<path d="M450.5,850.85 L466.5,850.85 M458.5,843.85 L458.5,857.85" stroke="#666" stroke-width="2.7"/>
<rect x="2082.5" y="826.9" width="126" height="45.7" fill="#64be7b"/>
<rect x="2082.5" y="871.8" width="126" height="45.7" fill="#64be7b"/>
<rect x="443.45" y="925.65" width="30.099999999999998" height="30.0" fill="none" stroke="#ababab" stroke-width="1.3"/>
<path d="M450.5,940.65 L466.5,940.65 M458.5,933.65 L458.5,947.65" stroke="#666" stroke-width="2.7"/>
<rect x="2082.5" y="961.6" width="126" height="45.7" fill="#f9c27d"/>
<rect x="443.45" y="1015.4499999999999" width="30.099999999999998" height="30.0" fill="none" stroke="#ababab" stroke-width="1.3"/>
<path d="M450.5,1030.45 L466.5,1030.45 M458.5,1023.45 L458.5,1037.45" stroke="#666" stroke-width="2.7"/>
<rect x="2082.5" y="1006.5" width="126" height="45.7" fill="#f9c27d"/>
<rect x="443.45" y="1060.3500000000001" width="30.099999999999998" height="30.0" fill="none" stroke="#ababab" stroke-width="1.3"/>
<path d="M450.5,1075.3500000000001 L466.5,1075.3500000000001 M458.5,1068.3500000000001 L458.5,1082.3500000000001" stroke="#666" stroke-width="2.7"/>
<rect x="443.45" y="1105.25" width="30.099999999999998" height="30.0" fill="none" stroke="#ababab" stroke-width="1.3"/>
<path d="M450.5,1120.25 L466.5,1120.25 M458.5,1113.25 L458.5,1127.25" stroke="#666" stroke-width="2.7"/>
<rect x="2082.5" y="1096.3" width="126" height="45.7" fill="#c5db7f"/>
<rect x="443.45" y="1150.15" width="30.099999999999998" height="30.0" fill="none" stroke="#ababab" stroke-width="1.3"/>
<path d="M450.5,1165.15 L466.5,1165.15 M458.5,1158.15 L458.5,1172.15" stroke="#666" stroke-width="2.7"/>
<rect x="2082.5" y="1141.2" width="126" height="45.7" fill="#f9c27d"/>
<rect x="443.45" y="1195.0500000000002" width="30.099999999999998" height="30.0" fill="none" stroke="#ababab" stroke-width="1.3"/>
<path d="M450.5,1210.0500000000002 L466.5,1210.0500000000002 M458.5,1203.0500000000002 L458.5,1217.0500000000002" stroke="#666" stroke-width="2.7"/>
<rect x="2082.5" y="1186.1" width="126" height="45.7" fill="#f3656b"/>
<rect x="443.45" y="1239.95" width="30.099999999999998" height="30.0" fill="none" stroke="#ababab" stroke-width="1.3"/>
<path d="M450.5,1254.95 L466.5,1254.95 M458.5,1247.95 L458.5,1261.95" stroke="#666" stroke-width="2.7"/>
<rect x="443.45" y="1284.8500000000001" width="30.099999999999998" height="30.0" fill="none" stroke="#ababab" stroke-width="1.3"/>
<path d="M450.5,1299.8500000000001 L466.5,1299.8500000000001 M458.5,1292.8500000000001 L458.5,1306.8500000000001" stroke="#666" stroke-width="2.7"/>
<rect x="2082.5" y="1275.9" width="126" height="45.7" fill="#c5db7f"/>
<rect x="443.45" y="1329.75" width="30.099999999999998" height="30.0" fill="none" stroke="#ababab" stroke-width="1.3"/>
<path d="M450.5,1344.75 L466.5,1344.75 M458.5,1337.75 L458.5,1351.75" stroke="#666" stroke-width="2.7"/>
<rect x="1086.5" y="575.5" width="2.2" height="73" fill="#111"/>
<rect x="1227.0" y="575.5" width="2.2" height="73" fill="#111"/>
<rect x="1367.5" y="575.5" width="2.2" height="73" fill="#111"/>
<rect x="1508.5" y="575.5" width="2.2" height="73" fill="#111"/>
<rect x="1649.0" y="575.5" width="2.2" height="73" fill="#111"/>
<rect x="1789.5" y="575.5" width="2.2" height="73" fill="#111"/>
<rect x="1940.0" y="575.5" width="2.2" height="73" fill="#111"/>
<rect x="2080.5" y="575.5" width="2.2" height="73" fill="#111"/>
<rect x="2208.5" y="575.5" width="2.2" height="73" fill="#111"/>
<rect x="934.0" y="611" width="2.2" height="38" fill="#111"/>
<rect x="934.0" y="648" width="2.2" height="700" fill="#111"/>
<rect x="1086.5" y="648" width="2.2" height="700" fill="#111"/>
<rect x="1227.0" y="648" width="2.2" height="700" fill="#111"/>
<rect x="1367.5" y="648" width="2.2" height="700" fill="#111"/>
<rect x="1508.5" y="648" width="2.2" height="700" fill="#111"/>
<rect x="1649.0" y="648" width="2.2" height="700" fill="#111"/>
<rect x="1789.5" y="648" width="2.2" height="700" fill="#111"/>
<rect x="1940.0" y="648" width="2.2" height="700" fill="#111"/>
<rect x="2080.5" y="648" width="2.2" height="700" fill="#111"/>
<rect x="2208.5" y="648" width="2.2" height="700" fill="#111"/>
<rect x="520" y="782.5" width="1690.5" height="2" fill="#111"/>
<rect x="520" y="917.2" width="1690.5" height="2" fill="#111"/>
<rect x="520" y="1051.9" width="1690.5" height="2" fill="#111"/>
<rect x="520" y="1231.5" width="1690.5" height="2" fill="#111"/>
<rect x="520" y="1319.4" width="1690.5" height="5" fill="#000"/>
<text x="524.8" y="681.0" font-size="28.8" fill="#000" font-weight="bold" textLength="219.8" lengthAdjust="spacingAndGlyphs" >Loan Measures:</text>
<text x="525" y="727.7" font-size="22.4" fill="#000" font-weight="bold" textLength="254.5" lengthAdjust="spacingAndGlyphs" >12 Month Loan Growth</text>
<text x="1077.3" y="727.7" font-size="22.4" fill="#000" font-weight="bold" textLength="106.3" lengthAdjust="spacingAndGlyphs" text-anchor="end" >1,235,988</text>
<text x="1295.5" y="722.2" font-size="22.4" fill="#000" font-weight="bold" textLength="106.3" lengthAdjust="spacingAndGlyphs" text-anchor="middle" >1,125,000</text>
<text x="1439.2" y="725.1" font-size="28.8" fill="#000" font-weight="bold" text-anchor="middle" >2</text>
<text x="1577.0" y="722.2" font-size="22.4" fill="#000" font-weight="bold" textLength="106.3" lengthAdjust="spacingAndGlyphs" text-anchor="middle" >1,500,000</text>
<text x="1863.0" y="722.2" font-size="22.4" fill="#000" font-weight="bold" textLength="106.3" lengthAdjust="spacingAndGlyphs" text-anchor="middle" >1,875,000</text>
<text x="2145.3" y="725.1" font-size="28.8" fill="#000" font-weight="bold" text-anchor="middle" >2</text>
<text x="525" y="772.6" font-size="22.4" fill="#000" font-weight="bold" textLength="178.5" lengthAdjust="spacingAndGlyphs" >Loan Production</text>
<text x="1077.3" y="772.6" font-size="22.4" fill="#000" font-weight="bold" textLength="106.3" lengthAdjust="spacingAndGlyphs" text-anchor="end" >4,714,574</text>
<text x="1295.5" y="767.1" font-size="22.4" fill="#000" font-weight="bold" textLength="106.3" lengthAdjust="spacingAndGlyphs" text-anchor="middle" >3,375,000</text>
<text x="1577.0" y="767.1" font-size="22.4" fill="#000" font-weight="bold" textLength="106.3" lengthAdjust="spacingAndGlyphs" text-anchor="middle" >4,500,000</text>
<text x="1719.8" y="770.0" font-size="28.8" fill="#000" font-weight="bold" text-anchor="middle" >3</text>
<text x="1863.0" y="767.1" font-size="22.4" fill="#000" font-weight="bold" textLength="106.3" lengthAdjust="spacingAndGlyphs" text-anchor="middle" >5,625,000</text>
<text x="2145.3" y="770.0" font-size="28.8" fill="#000" font-weight="bold" text-anchor="middle" >3</text>
<text x="524.8" y="815.7" font-size="28.8" fill="#000" font-weight="bold" textLength="245.1" lengthAdjust="spacingAndGlyphs" >Shares Measures:</text>
<text x="525" y="862.4" font-size="22.4" fill="#000" font-weight="bold" textLength="274.2" lengthAdjust="spacingAndGlyphs" >12 Month Shares Growth</text>
<text x="1077.3" y="862.4" font-size="22.4" fill="#000" font-weight="bold" textLength="106.3" lengthAdjust="spacingAndGlyphs" text-anchor="end" >2,330,397</text>
<text x="1295.5" y="856.9" font-size="22.4" fill="#000" font-weight="bold" textLength="85.4" lengthAdjust="spacingAndGlyphs" text-anchor="middle" >450,000</text>
<text x="1577.0" y="856.9" font-size="22.4" fill="#000" font-weight="bold" textLength="85.4" lengthAdjust="spacingAndGlyphs" text-anchor="middle" >600,000</text>
<text x="1863.0" y="856.9" font-size="22.4" fill="#000" font-weight="bold" textLength="85.4" lengthAdjust="spacingAndGlyphs" text-anchor="middle" >750,000</text>
<text x="2011.3" y="859.8" font-size="28.8" fill="#000" font-weight="bold" text-anchor="middle" >4</text>
<text x="2145.3" y="859.8" font-size="28.8" fill="#000" font-weight="bold" text-anchor="middle" >4</text>
<text x="525" y="907.3" font-size="22.4" fill="#000" font-weight="bold" textLength="260.1" lengthAdjust="spacingAndGlyphs" >New Checking Accounts</text>
<text x="1077.3" y="907.3" font-size="22.4" fill="#000" font-weight="bold" textLength="38.7" lengthAdjust="spacingAndGlyphs" text-anchor="end" >608</text>
<text x="1295.5" y="901.8" font-size="22.4" fill="#000" font-weight="bold" textLength="38.7" lengthAdjust="spacingAndGlyphs" text-anchor="middle" >300</text>
<text x="1577.0" y="901.8" font-size="22.4" fill="#000" font-weight="bold" textLength="38.7" lengthAdjust="spacingAndGlyphs" text-anchor="middle" >400</text>
<text x="1863.0" y="901.8" font-size="22.4" fill="#000" font-weight="bold" textLength="38.7" lengthAdjust="spacingAndGlyphs" text-anchor="middle" >500</text>
<text x="2011.3" y="904.7" font-size="28.8" fill="#000" font-weight="bold" text-anchor="middle" >4</text>
<text x="2145.3" y="904.7" font-size="28.8" fill="#000" font-weight="bold" text-anchor="middle" >4</text>
<text x="524.8" y="950.4" font-size="28.8" fill="#000" font-weight="bold" textLength="315.4" lengthAdjust="spacingAndGlyphs" >Profitability Measures:</text>
<text x="525" y="997.1" font-size="22.4" fill="#000" font-weight="bold" textLength="219" lengthAdjust="spacingAndGlyphs" >12 Month Net Profit</text>
<text x="1077.3" y="997.1" font-size="22.4" fill="#000" font-weight="bold" textLength="106.3" lengthAdjust="spacingAndGlyphs" text-anchor="end" >1,245,481</text>
<text x="1295.5" y="991.6" font-size="22.4" fill="#000" font-weight="bold" textLength="85.4" lengthAdjust="spacingAndGlyphs" text-anchor="middle" >937,500</text>
<text x="1439.2" y="994.5" font-size="28.8" fill="#000" font-weight="bold" text-anchor="middle" >2</text>
<text x="1577.0" y="991.6" font-size="22.4" fill="#000" font-weight="bold" textLength="106.3" lengthAdjust="spacingAndGlyphs" text-anchor="middle" >1,250,000</text>
<text x="1863.0" y="991.6" font-size="22.4" fill="#000" font-weight="bold" textLength="106.3" lengthAdjust="spacingAndGlyphs" text-anchor="middle" >1,562,500</text>
<text x="2145.3" y="994.5" font-size="28.8" fill="#000" font-weight="bold" text-anchor="middle" >2</text>
<text x="525" y="1042.0" font-size="22.4" fill="#000" font-weight="bold" textLength="346.7" lengthAdjust="spacingAndGlyphs" >Efficiency Ratio = NIE/(NIM+NII)</text>
<text x="1082.5" y="1042.0" font-size="22.4" fill="#000" font-weight="bold" textLength="79.2" lengthAdjust="spacingAndGlyphs" text-anchor="end" >36.02%</text>
<text x="1298.2" y="1036.5" font-size="22.4" fill="#000" font-weight="bold" textLength="79.2" lengthAdjust="spacingAndGlyphs" text-anchor="middle" >43.75%</text>
<text x="1439.2" y="1039.4" font-size="28.8" fill="#000" font-weight="bold" text-anchor="middle" >2</text>
<text x="1579.8" y="1036.5" font-size="22.4" fill="#000" font-weight="bold" textLength="79.2" lengthAdjust="spacingAndGlyphs" text-anchor="middle" >35.00%</text>
<text x="1865.8" y="1036.5" font-size="22.4" fill="#000" font-weight="bold" textLength="79.2" lengthAdjust="spacingAndGlyphs" text-anchor="middle" >26.25%</text>
<text x="2145.3" y="1039.4" font-size="28.8" fill="#000" font-weight="bold" text-anchor="middle" >2</text>
<text x="524.8" y="1085.1" font-size="28.8" fill="#000" font-weight="bold" textLength="201.7" lengthAdjust="spacingAndGlyphs" >FTE Measures:</text>
<text x="525" y="1131.8" font-size="22.4" fill="#000" font-weight="bold" textLength="160.6" lengthAdjust="spacingAndGlyphs" >Loans / Officer</text>
<text x="1077.3" y="1131.8" font-size="22.4" fill="#000" font-weight="bold" textLength="106.3" lengthAdjust="spacingAndGlyphs" text-anchor="end" >9,296,874</text>
<text x="1295.5" y="1126.3" font-size="22.4" fill="#000" font-weight="bold" textLength="106.3" lengthAdjust="spacingAndGlyphs" text-anchor="middle" >6,750,000</text>
<text x="1577.0" y="1126.3" font-size="22.4" fill="#000" font-weight="bold" textLength="106.3" lengthAdjust="spacingAndGlyphs" text-anchor="middle" >9,000,000</text>
<text x="1719.8" y="1129.2" font-size="28.8" fill="#000" font-weight="bold" text-anchor="middle" >3</text>
<text x="1863.0" y="1126.3" font-size="22.4" fill="#000" font-weight="bold" textLength="119.2" lengthAdjust="spacingAndGlyphs" text-anchor="middle" >11,250,000</text>
<text x="2145.3" y="1129.2" font-size="28.8" fill="#000" font-weight="bold" text-anchor="middle" >3</text>
<text x="525" y="1176.7" font-size="22.4" fill="#000" font-weight="bold" textLength="204.3" lengthAdjust="spacingAndGlyphs" >Shares / Other FTE</text>
<text x="1077.3" y="1176.7" font-size="22.4" fill="#000" font-weight="bold" textLength="106.3" lengthAdjust="spacingAndGlyphs" text-anchor="end" >5,460,855</text>
<text x="1295.5" y="1171.2" font-size="22.4" fill="#000" font-weight="bold" textLength="106.3" lengthAdjust="spacingAndGlyphs" text-anchor="middle" >4,500,000</text>
<text x="1439.2" y="1174.1" font-size="28.8" fill="#000" font-weight="bold" text-anchor="middle" >2</text>
<text x="1577.0" y="1171.2" font-size="22.4" fill="#000" font-weight="bold" textLength="106.3" lengthAdjust="spacingAndGlyphs" text-anchor="middle" >6,000,000</text>
<text x="1863.0" y="1171.2" font-size="22.4" fill="#000" font-weight="bold" textLength="106.3" lengthAdjust="spacingAndGlyphs" text-anchor="middle" >7,500,000</text>
<text x="2145.3" y="1174.1" font-size="28.8" fill="#000" font-weight="bold" text-anchor="middle" >2</text>
<text x="525" y="1221.6" font-size="22.4" fill="#000" font-weight="bold" textLength="148.6" lengthAdjust="spacingAndGlyphs" >Training / FTE</text>
<text x="1077.3" y="1221.6" font-size="22.4" fill="#000" font-weight="bold" textLength="33.8" lengthAdjust="spacingAndGlyphs" text-anchor="end" >9.1</text>
<text x="1158" y="1219.0" font-size="28.8" fill="#000" font-weight="bold" text-anchor="middle" >1</text>
<text x="1295.5" y="1216.1" font-size="22.4" fill="#000" font-weight="bold" textLength="46.7" lengthAdjust="spacingAndGlyphs" text-anchor="middle" >13.5</text>
<text x="1577.0" y="1216.1" font-size="22.4" fill="#000" font-weight="bold" textLength="46.7" lengthAdjust="spacingAndGlyphs" text-anchor="middle" >18.0</text>
<text x="1863.0" y="1216.1" font-size="22.4" fill="#000" font-weight="bold" textLength="46.7" lengthAdjust="spacingAndGlyphs" text-anchor="middle" >22.5</text>
<text x="2145.3" y="1219.0" font-size="28.8" fill="#000" font-weight="bold" text-anchor="middle" >1</text>
<text x="524.8" y="1264.7" font-size="28.8" fill="#000" font-weight="bold" textLength="273.7" lengthAdjust="spacingAndGlyphs" >Member Measures:</text>
<text x="525" y="1311.4" font-size="22.4" fill="#000" font-weight="bold" textLength="238.3" lengthAdjust="spacingAndGlyphs" >Total Balances per HH</text>
<text x="1077.3" y="1311.4" font-size="22.4" fill="#000" font-weight="bold" textLength="72.5" lengthAdjust="spacingAndGlyphs" text-anchor="end" >31,717</text>
<text x="1295.5" y="1305.9" font-size="22.4" fill="#000" font-weight="bold" textLength="72.5" lengthAdjust="spacingAndGlyphs" text-anchor="middle" >20,625</text>
<text x="1577.0" y="1305.9" font-size="22.4" fill="#000" font-weight="bold" textLength="72.5" lengthAdjust="spacingAndGlyphs" text-anchor="middle" >27,500</text>
<text x="1719.8" y="1308.8" font-size="28.8" fill="#000" font-weight="bold" text-anchor="middle" >3</text>
<text x="1863.0" y="1305.9" font-size="22.4" fill="#000" font-weight="bold" textLength="72.5" lengthAdjust="spacingAndGlyphs" text-anchor="middle" >34,375</text>
<text x="2145.3" y="1308.8" font-size="28.8" fill="#000" font-weight="bold" text-anchor="middle" >3</text>
<text x="524.8" y="1354.5" font-size="28.8" fill="#000" font-weight="bold" textLength="161" lengthAdjust="spacingAndGlyphs" >Row Total</text>
<text x="2145.3" y="1353.7" font-size="28.8" fill="#000" font-weight="bold" text-anchor="middle" >26</text>
</g>
<rect x="437" y="1343.5" width="2040.5" height="52" fill="#e6e6e6"/>
<rect x="437" y="1342.8" width="182" height="2" fill="#a9a9a9"/>
<rect x="739.2" y="1342.8" width="922" height="2" fill="#a9a9a9"/>
<rect x="617.2" y="1343" width="2" height="43" fill="#a9a9a9"/>
<rect x="739.2" y="1343" width="2" height="43" fill="#a9a9a9"/>
<path d="M493.7,1362.7 L486.2,1369.7 L493.7,1376.7 Z" fill="#c8c8c8"/>
<path d="M537.3,1362.7 L544.8,1369.7 L537.3,1376.7 Z" fill="#c8c8c8"/>
<text x="641.3" y="1373.4" font-size="25" fill="#217a48" font-weight="bold" textLength="73.5" lengthAdjust="spacingAndGlyphs" >Sheet1</text>
<circle cx="1635.6" cy="1362.5" r="1.5" fill="#a8a8a8"/>
<circle cx="1635.6" cy="1370" r="1.5" fill="#a8a8a8"/>
<circle cx="1635.6" cy="1377.3" r="1.5" fill="#a8a8a8"/>
<rect x="1660.5" y="1343.5" width="1.5" height="52" fill="#f6f6f6"/>
<rect x="1662" y="1342.8" width="816" height="1.6" fill="#d2d2d2"/>
<rect x="437" y="1393.8" width="2080.5" height="1.2" fill="#efefef"/>
<rect x="1663.3" y="1357" width="813.3" height="25" fill="#d9d9d9"/>
<rect x="1663.8" y="1357.5" width="24.5" height="24" fill="#fff" stroke="#d0d0d0" stroke-width="1"/>
<rect x="1689" y="1357.5" width="253" height="24" fill="#fff" stroke="#d0d0d0" stroke-width="1"/>
<rect x="2451.5" y="1357.5" width="25" height="24" fill="#fff" stroke="#d0d0d0" stroke-width="1"/>
<path d="M1679.5,1364 L1671.5,1369.8 L1679.5,1375.6 Z" fill="#777"/>
<path d="M2460.5,1364 L2468.5,1369.8 L2460.5,1375.6 Z" fill="#777"/>
<rect x="2477.5" y="344" width="40" height="999.5" fill="#ececec"/>
<rect x="2477.5" y="346" width="2" height="997.5" fill="#c4c4c4"/>
<rect x="2486" y="346.2" width="25.5" height="25.5" fill="#fff" stroke="#d0d0d0" stroke-width="1"/>
<rect x="2486" y="371.7" width="25.5" height="305.7" fill="#fff" stroke="#d0d0d0" stroke-width="1"/>
<rect x="2486" y="677.4" width="25.5" height="640" fill="#dcdcdc"/>
<rect x="2486" y="1317" width="25.5" height="24.7" fill="#fff" stroke="#d0d0d0" stroke-width="1"/>
<path d="M2492.5,362 L2498.8,355.5 L2505,362 Z" fill="#777"/>
<path d="M2492.5,1326.5 L2498.8,1333 L2505,1326.5 Z" fill="#777"/>
</g>
</svg></body></html>
